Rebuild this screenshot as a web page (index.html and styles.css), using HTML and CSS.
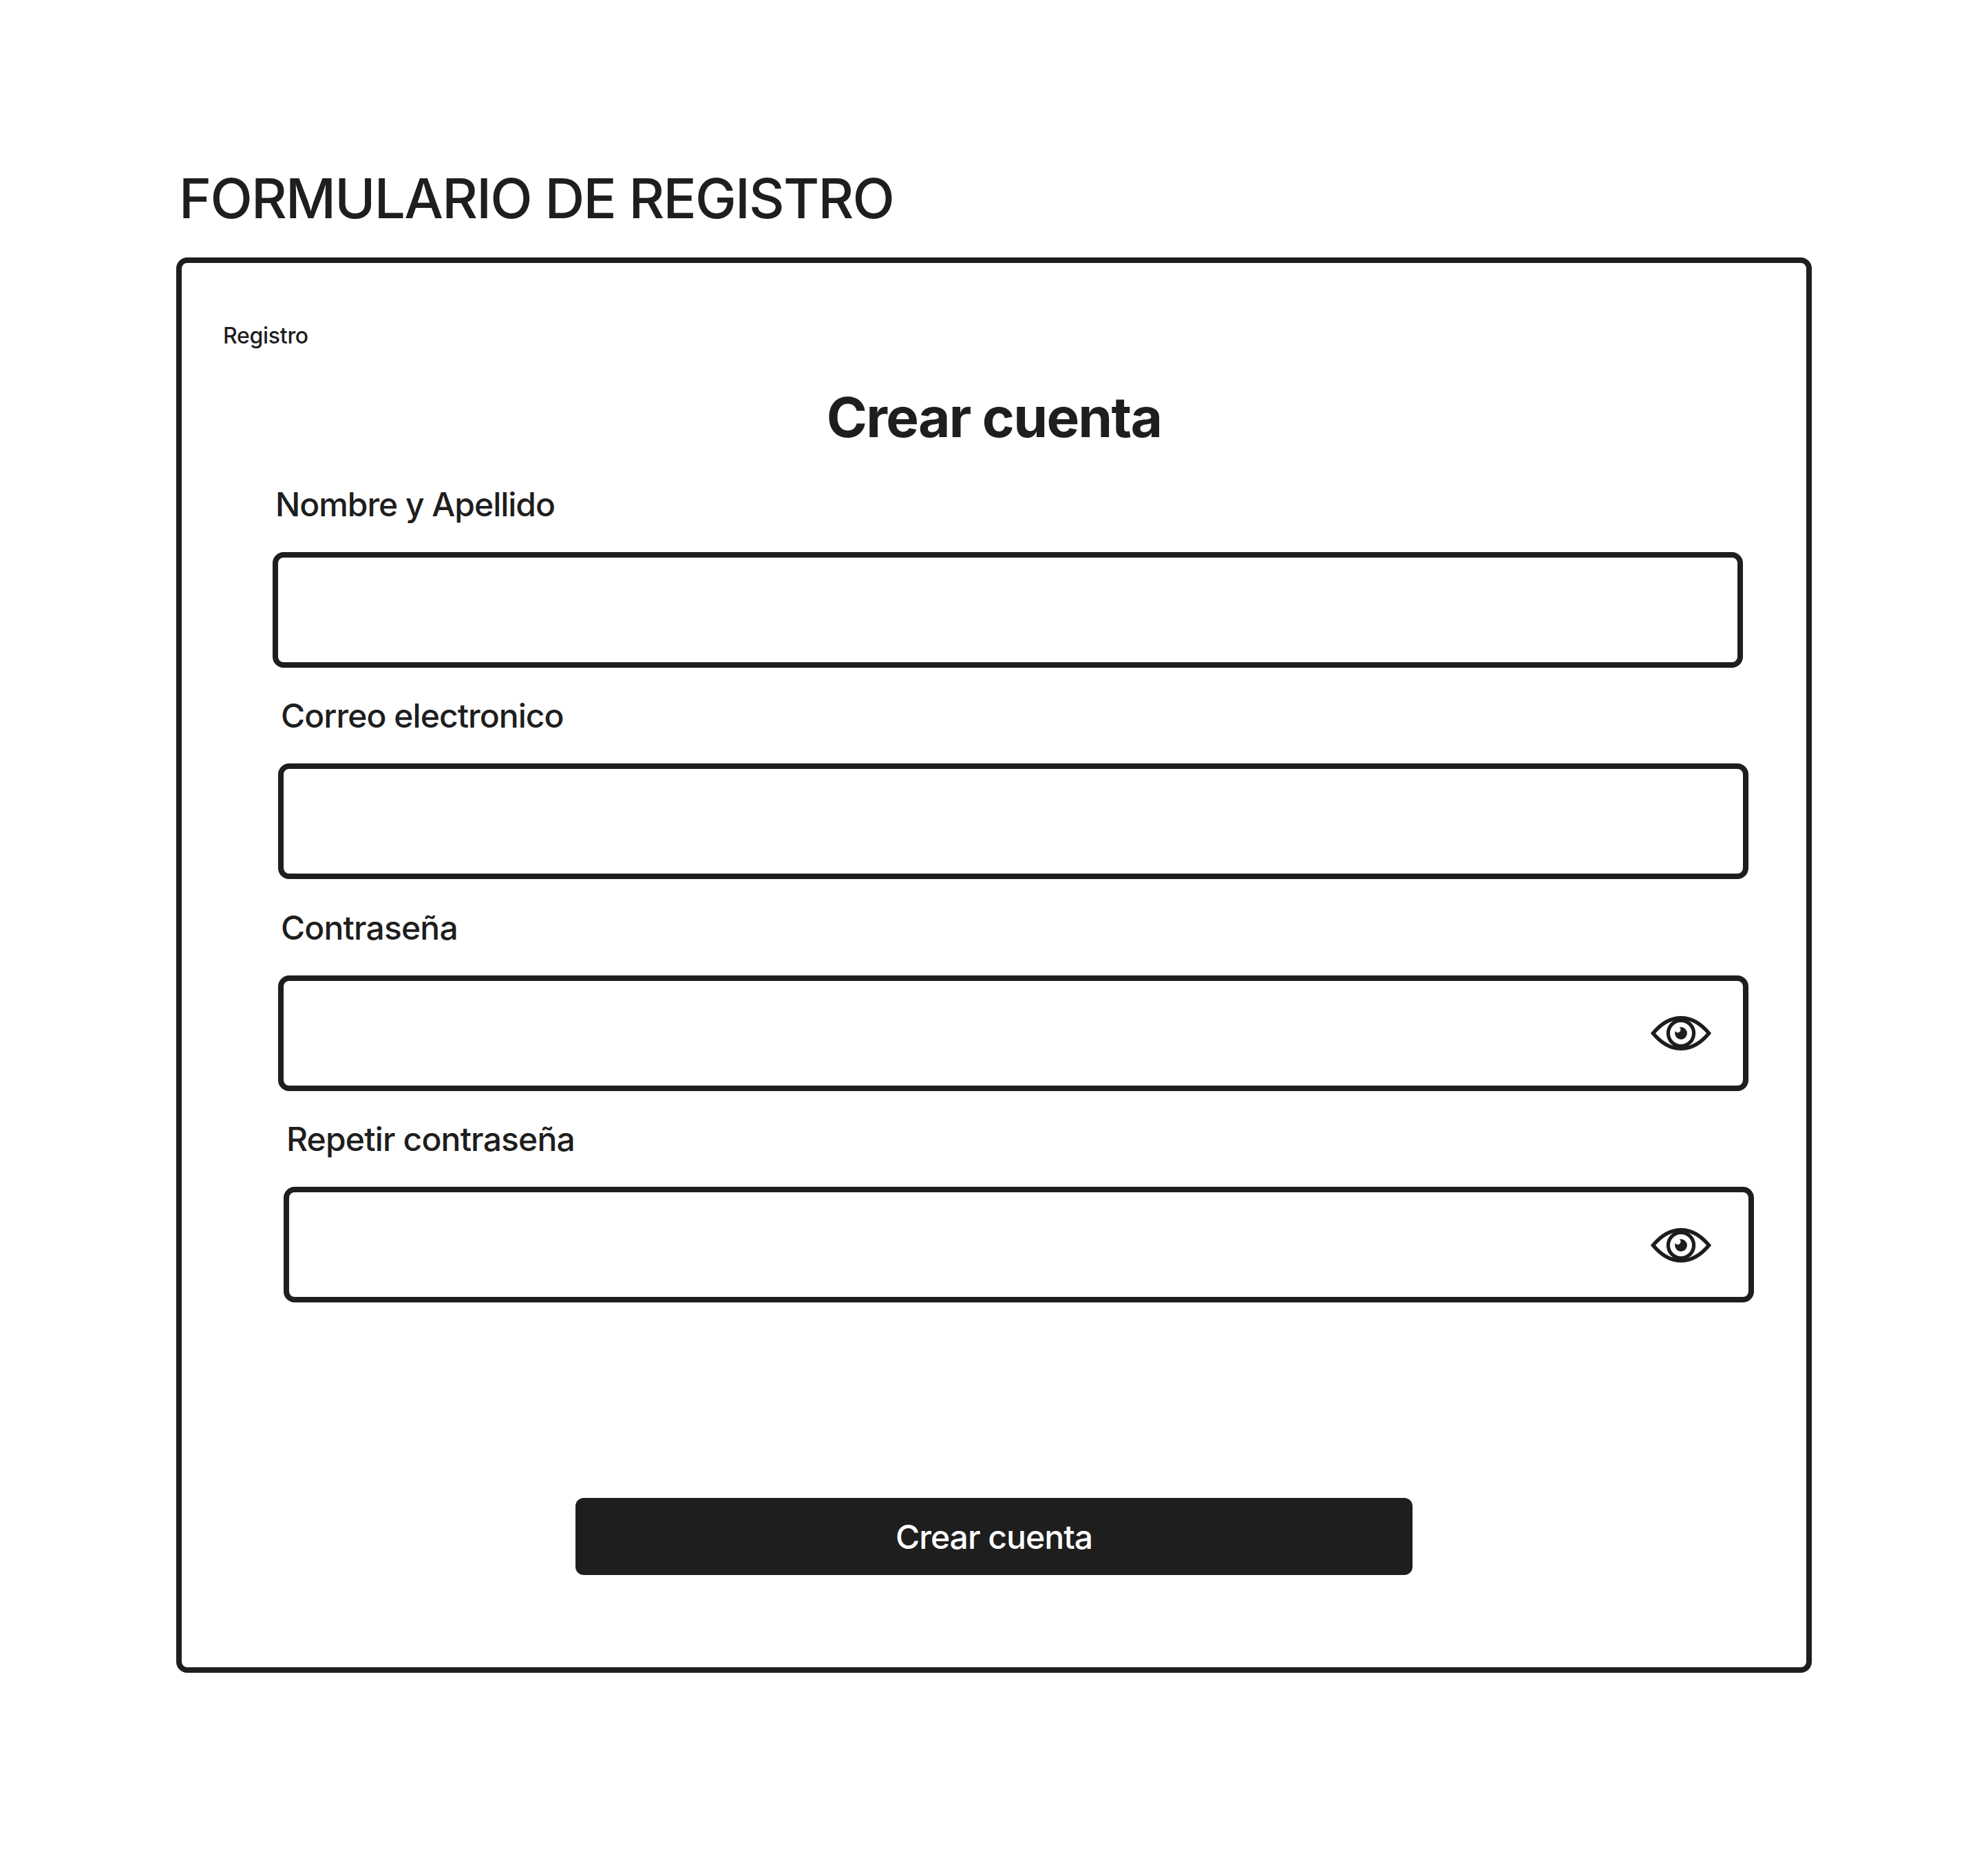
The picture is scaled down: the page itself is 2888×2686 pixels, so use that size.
FILE: index.html
```html
<!DOCTYPE html>
<html lang="es">
<head>
<meta charset="utf-8">
<title>Formulario de registro</title>
<link rel="stylesheet" href="styles.css">
</head>
<body>
<svg class="defs" aria-hidden="true">
  <symbol id="eye" viewBox="-46 -27 92 54">
    <path d="M-40.6 0C-29 -14 -15 -22.3 0 -22.3S29 -14 40.6 0C29 14 15 22.3 0 22.3S-29 14 -40.6 0Z" fill="none" stroke="#1d1d1b" stroke-width="5.4"/>
    <circle r="18.6" fill="none" stroke="#1d1d1b" stroke-width="5.2"/>
    <circle r="8.9" fill="#1d1d1b"/>
    <circle cx="-4.7" cy="-5.2" r="4.2" fill="#fff"/>
  </symbol>
</svg>
<main class="page">
  <h1 class="page-title">FORMULARIO DE REGISTRO</h1>
  <form class="card">
    <p class="crumb">Registro</p>
    <h2 class="heading">Crear cuenta</h2>
    <div class="fields">
      <div class="field">
        <label class="label label-tight" for="name">Nombre y Apellido</label>
        <div class="box"><input class="input" id="name" type="text"></div>
      </div>
      <div class="field indent-1">
        <label class="label" for="mail">Correo electronico</label>
        <div class="box"><input class="input" id="mail" type="text"></div>
      </div>
      <div class="field indent-1">
        <label class="label label-loose" for="pass">Contraseña</label>
        <div class="box"><input class="input" id="pass" type="password"><svg class="eye"><use href="#eye"/></svg></div>
      </div>
      <div class="field indent-2">
        <label class="label label-loose" for="pass2">Repetir contraseña</label>
        <div class="box"><input class="input" id="pass2" type="password"><svg class="eye eye-last"><use href="#eye"/></svg></div>
      </div>
    </div>
    <button class="submit" type="button">Crear cuenta</button>
  </form>
</main>
</body>
</html>
```

FILE: styles.css
```css
* { box-sizing: border-box; }

body {
  margin: 0;
  background: #fff;
  color: #1e1e1e;
  font-family: Inter, "Liberation Sans", sans-serif;
  font-weight: 500;
  font-optical-sizing: none;
}

.defs { display: none; }

.page {
  width: 2888px;
  height: 2686px;
  padding: 239px 256px 0;
}

.page-title {
  margin: 0 0 38px;
  padding-left: 4px;
  font-size: 80px;
  line-height: 97px;
  font-weight: 500;
  letter-spacing: -0.022em;
}

.card {
  display: flex;
  flex-direction: column;
  width: 2376px;
  height: 2056px;
  padding-top: 86px;
  border: 8px solid #1e1e1e;
  border-radius: 16px;
}

.crumb {
  margin: 0;
  padding-left: 60px;
  font-size: 32px;
  line-height: 39px;
  letter-spacing: -0.009em;
}

.heading {
  margin: 50px 0 0;
  font-size: 80px;
  line-height: 97px;
  font-weight: 700;
  text-align: center;
  letter-spacing: -0.021em;
}

.fields {
  display: flex;
  flex-direction: column;
  gap: 41.67px;
  margin: 49.5px 0 0 132px;
}

.field {
  display: flex;
  flex-direction: column;
  gap: 40px;
  width: 2136px;
}

.indent-1 { margin-left: 8px; }
.indent-2 { margin-left: 16px; }

.label {
  padding-left: 4px;
  font-size: 48px;
  line-height: 58px;
  letter-spacing: -0.02em;
}

.label-tight { letter-spacing: -0.0215em; }
.label-loose { letter-spacing: -0.0175em; }

.box {
  display: flex;
  align-items: center;
  height: 168px;
  border: 8px solid #1e1e1e;
  border-radius: 16px;
}

.input {
  flex: 1;
  height: 100%;
  padding: 0 32px;
  border: 0;
  outline: 0;
  background: none;
  font: inherit;
  font-size: 48px;
}

.eye {
  width: 92px;
  height: 54px;
  margin-right: 44px;
}

.eye-last {
  margin-top: 2px;
  margin-right: 52px;
}

.submit {
  align-self: center;
  width: 1216px;
  height: 112px;
  margin-top: 283.5px;
  padding: 2px 0 0;
  border: 0;
  border-radius: 12px;
  background: #1e1e1e;
  color: #fff;
  font: inherit;
  font-size: 48px;
  letter-spacing: -0.02em;
}
```
